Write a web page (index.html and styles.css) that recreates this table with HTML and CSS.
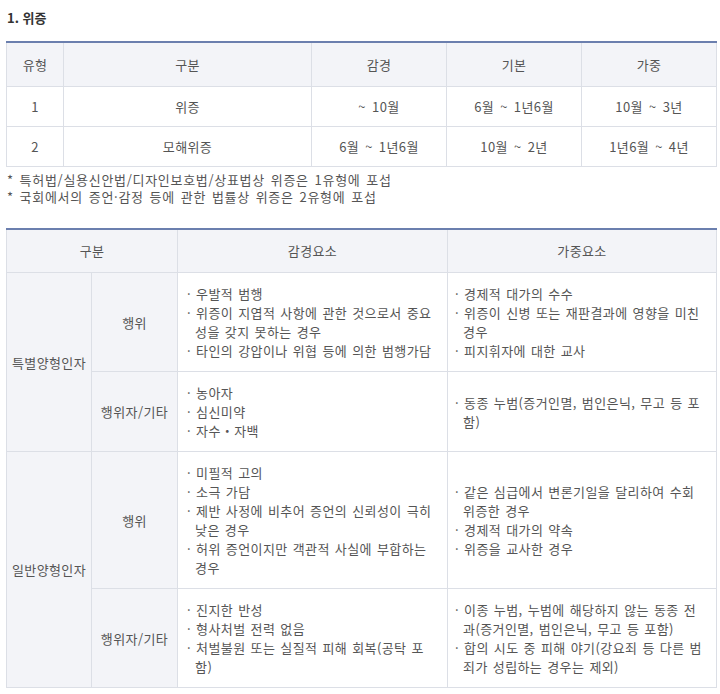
FILE: index.html
```html
<!DOCTYPE html>
<html lang="ko">
<head>
<meta charset="utf-8">
<title>위증</title>
<link rel="stylesheet" href="styles.css">
</head>
<body>
<div class="page">
  <h3 class="title">1. 위증</h3>

  <table class="grid grid-type">
    <colgroup>
      <col class="c-type"><col class="c-kind"><col class="c-range"><col class="c-range"><col class="c-range-last">
    </colgroup>
    <thead>
      <tr><th>유형</th><th>구분</th><th>감경</th><th>기본</th><th>가중</th></tr>
    </thead>
    <tbody>
      <tr><td>1</td><td>위증</td><td>~ 10월</td><td>6월 ~ 1년6월</td><td>10월 ~ 3년</td></tr>
      <tr><td>2</td><td>모해위증</td><td>6월 ~ 1년6월</td><td>10월 ~ 2년</td><td>1년6월 ~ 4년</td></tr>
    </tbody>
  </table>

  <div class="notes">
    <p>* 특허법/실용신안법/디자인보호법/상표법상 위증은 1유형에 포섭</p>
    <p>* 국회에서의 증언·감정 등에 관한 법률상 위증은 2유형에 포섭</p>
  </div>

  <table class="grid grid-factor">
    <colgroup>
      <col class="c-group"><col class="c-sub"><col class="c-mit"><col class="c-agg">
    </colgroup>
    <thead>
      <tr><th colspan="2">구분</th><th>감경요소</th><th>가중요소</th></tr>
    </thead>
    <tbody>
      <tr>
        <td rowspan="2" class="label">특별양형인자</td>
        <td class="label">행위</td>
        <td class="items mit">
          <div class="item">· 우발적 범행</div>
          <div class="item">· 위증이 지엽적 사항에 관한 것으로서 중요성을 갖지 못하는 경우</div>
          <div class="item">· 타인의 강압이나 위협 등에 의한 범행가담</div>
        </td>
        <td class="items agg">
          <div class="item">· 경제적 대가의 수수</div>
          <div class="item">· 위증이 신병 또는 재판결과에 영향을 미친 경우</div>
          <div class="item">· 피지휘자에 대한 교사</div>
        </td>
      </tr>
      <tr>
        <td class="label">행위자/기타</td>
        <td class="items mit">
          <div class="item">· 농아자</div>
          <div class="item">· 심신미약</div>
          <div class="item">· 자수・자백</div>
        </td>
        <td class="items agg">
          <div class="item">· 동종 누범(증거인멸, 범인은닉, 무고 등 포함)</div>
        </td>
      </tr>
      <tr>
        <td rowspan="2" class="label">일반양형인자</td>
        <td class="label">행위</td>
        <td class="items mit">
          <div class="item">· 미필적 고의</div>
          <div class="item">· 소극 가담</div>
          <div class="item">· 제반 사정에 비추어 증언의 신뢰성이 극히 낮은 경우</div>
          <div class="item">· 허위 증언이지만 객관적 사실에 부합하는 경우</div>
        </td>
        <td class="items agg">
          <div class="item">· 같은 심급에서 변론기일을 달리하여 수회 위증한 경우</div>
          <div class="item">· 경제적 대가의 약속</div>
          <div class="item">· 위증을 교사한 경우</div>
        </td>
      </tr>
      <tr>
        <td class="label">행위자/기타</td>
        <td class="items mit">
          <div class="item">· 진지한 반성</div>
          <div class="item">· 형사처벌 전력 없음</div>
          <div class="item">· 처벌불원 또는 실질적 피해 회복(공탁 포함)</div>
        </td>
        <td class="items agg">
          <div class="item">· 이종 누범, 누범에 해당하지 않는 동종 전과(증거인멸, 범인은닉, 무고 등 포함)</div>
          <div class="item">· 합의 시도 중 피해 야기(강요죄 등 다른 범죄가 성립하는 경우는 제외)</div>
        </td>
      </tr>
    </tbody>
  </table>
</div>
</body>
</html>
```

FILE: styles.css
```css
* { box-sizing: border-box; }

html, body {
  margin: 0;
  padding: 0;
  background: #ffffff;
}

body {
  font-family: "Noto Sans CJK KR", "Noto Sans", sans-serif;
  font-size: 13px;
  color: #555555;
  letter-spacing: 0.4px;
}

.page {
  width: 720px;
  padding: 9px 4px 0 6px;
}

.title {
  margin: 0 0 15px 1px;
  font-size: 13px;
  font-weight: bold;
  color: #333333;
  line-height: 17px;
  letter-spacing: 0;
}

.grid {
  width: 710px;
  border-collapse: collapse;
  table-layout: fixed;
  border-top: 2px solid #6b7fae;
}

.grid th,
.grid td {
  border: 1px solid #dcdfe6;
  vertical-align: middle;
  line-height: 19px;
}

.grid th {
  background: #f3f4f8;
  font-weight: normal;
  color: #555555;
  text-align: center;
  height: 44px;
  padding: 0 4px;
}

.grid-type td {
  height: 40px;
  text-align: center;
  padding: 0 4px;
  word-spacing: 2px;
}

.c-type { width: 57px; }
.c-kind { width: 248px; }
.c-range { width: 135px; }
.c-range-last { width: 135px; }

.notes {
  padding: 4px 0 0 1px;
  margin-bottom: 23px;
}

.notes p {
  margin: 0;
  line-height: 17px;
  letter-spacing: 0.7px;
  word-spacing: 1.5px;
}

.c-group { width: 85px; }
.c-sub { width: 86px; }
.c-mit { width: 270px; }
.c-agg { width: 269px; }

.grid-factor td.label {
  background: #f3f4f8;
  text-align: center;
  padding: 0 1px;
}

.grid-factor td.items {
  padding: 11px 8px 11px 9px;
  word-break: break-all;
}

.grid-factor td.agg {
  padding-left: 7px;
}

.item {
  padding-left: 8px;
  text-indent: -8px;
  word-spacing: 1px;
}
```
